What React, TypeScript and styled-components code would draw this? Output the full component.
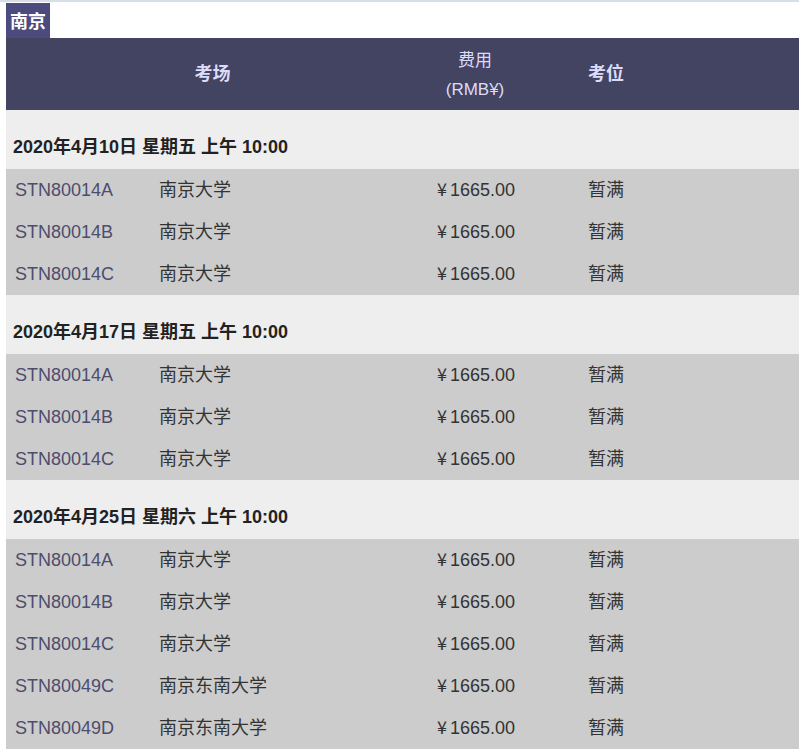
import React from "react";
import styled, { createGlobalStyle } from "styled-components";

const Global = createGlobalStyle`
  html, body { margin: 0; padding: 0; background: #ffffff; }
  body { font-family: "Liberation Sans", Arial, "Noto Sans CJK SC", sans-serif; }
`;

const Page = styled.div`
  border-top: 2px solid #d6dee8;
  padding: 1px 0 0 6px;
`;

const CityTag = styled.div`
  display: inline-block;
  background: #4b4b7e;
  color: #ffffff;
  font-family: "Noto Sans CJK SC", sans-serif;
  font-weight: 700;
  font-size: 18px;
  line-height: 35px;
  height: 35px;
  padding: 0 4px 0 4px;
  vertical-align: top;
`;

const HeaderBar = styled.div`
  display: grid;
  grid-template-columns: 413px 112px 150px 1fr;
  align-items: center;
  height: 72px;
  background: #434362;
  color: #dcdcf8;
  font-family: "Liberation Sans", Arial, "Noto Sans CJK SC", sans-serif;
  font-size: 17px;
`;

const HeadCell = styled.div<{ $bold?: boolean }>`
  text-align: center;
  font-weight: ${(p) => (p.$bold ? 700 : 400)};
  font-size: ${(p) => (p.$bold ? "18px" : "17px")};
  line-height: 29px;
  padding-top: 1px;
`;

const GroupTitle = styled.div`
  background: #eeeeee;
  color: #222222;
  font-family: "Liberation Sans", Arial, "Noto Sans CJK SC", sans-serif;
  font-weight: 700;
  font-size: 18px;
  line-height: 21px;
  padding: 27px 7px 11px;
`;

const Row = styled.div`
  display: grid;
  grid-template-columns: 144px 279px 150px 1fr;
  align-items: center;
  height: 42px;
  background: #cccccc;
  font-size: 18px;
  line-height: 24px;
`;

const Code = styled.div`
  padding-left: 9px;
  color: #4d4d6e;
  font-family: "Liberation Sans", Arial, sans-serif;
`;

const Cell = styled.div<{ $pad?: number }>`
  padding-left: ${(p) => p.$pad ?? 9}px;
  color: #333333;
  font-family: "Liberation Sans", Arial, "Noto Sans CJK SC", sans-serif;
`;

const Yen = styled.span`
  font-family: "Noto Sans CJK SC", sans-serif;
  line-height: 0;
  margin-right: 3px;
`;

type Item = { code: string; name: string };
type Group = { title: string; items: Item[] };

const groups: Group[] = [
  {
    title: "2020年4月10日 星期五 上午 10:00",
    items: [
      { code: "STN80014A", name: "南京大学" },
      { code: "STN80014B", name: "南京大学" },
      { code: "STN80014C", name: "南京大学" },
    ],
  },
  {
    title: "2020年4月17日 星期五 上午 10:00",
    items: [
      { code: "STN80014A", name: "南京大学" },
      { code: "STN80014B", name: "南京大学" },
      { code: "STN80014C", name: "南京大学" },
    ],
  },
  {
    title: "2020年4月25日 星期六 上午 10:00",
    items: [
      { code: "STN80014A", name: "南京大学" },
      { code: "STN80014B", name: "南京大学" },
      { code: "STN80014C", name: "南京大学" },
      { code: "STN80049C", name: "南京东南大学" },
      { code: "STN80049D", name: "南京东南大学" },
    ],
  },
];

export default function App() {
  return (
    <>
      <Global />
      <Page>
        <CityTag>南京</CityTag>
        <HeaderBar>
          <HeadCell $bold>考场</HeadCell>
          <HeadCell>
            费用
            <br />
            (RMB¥)
          </HeadCell>
          <HeadCell $bold>考位</HeadCell>
          <div />
        </HeaderBar>
        {groups.map((g, gi) => (
          <React.Fragment key={gi}>
            <GroupTitle>{g.title}</GroupTitle>
            {g.items.map((it, i) => (
              <Row key={i}>
                <Code>{it.code}</Code>
                <Cell>{it.name}</Cell>
                <Cell $pad={8}>
                  <Yen>¥</Yen>1665.00
                </Cell>
                <Cell>暂满</Cell>
              </Row>
            ))}
          </React.Fragment>
        ))}
      </Page>
    </>
  );
}
